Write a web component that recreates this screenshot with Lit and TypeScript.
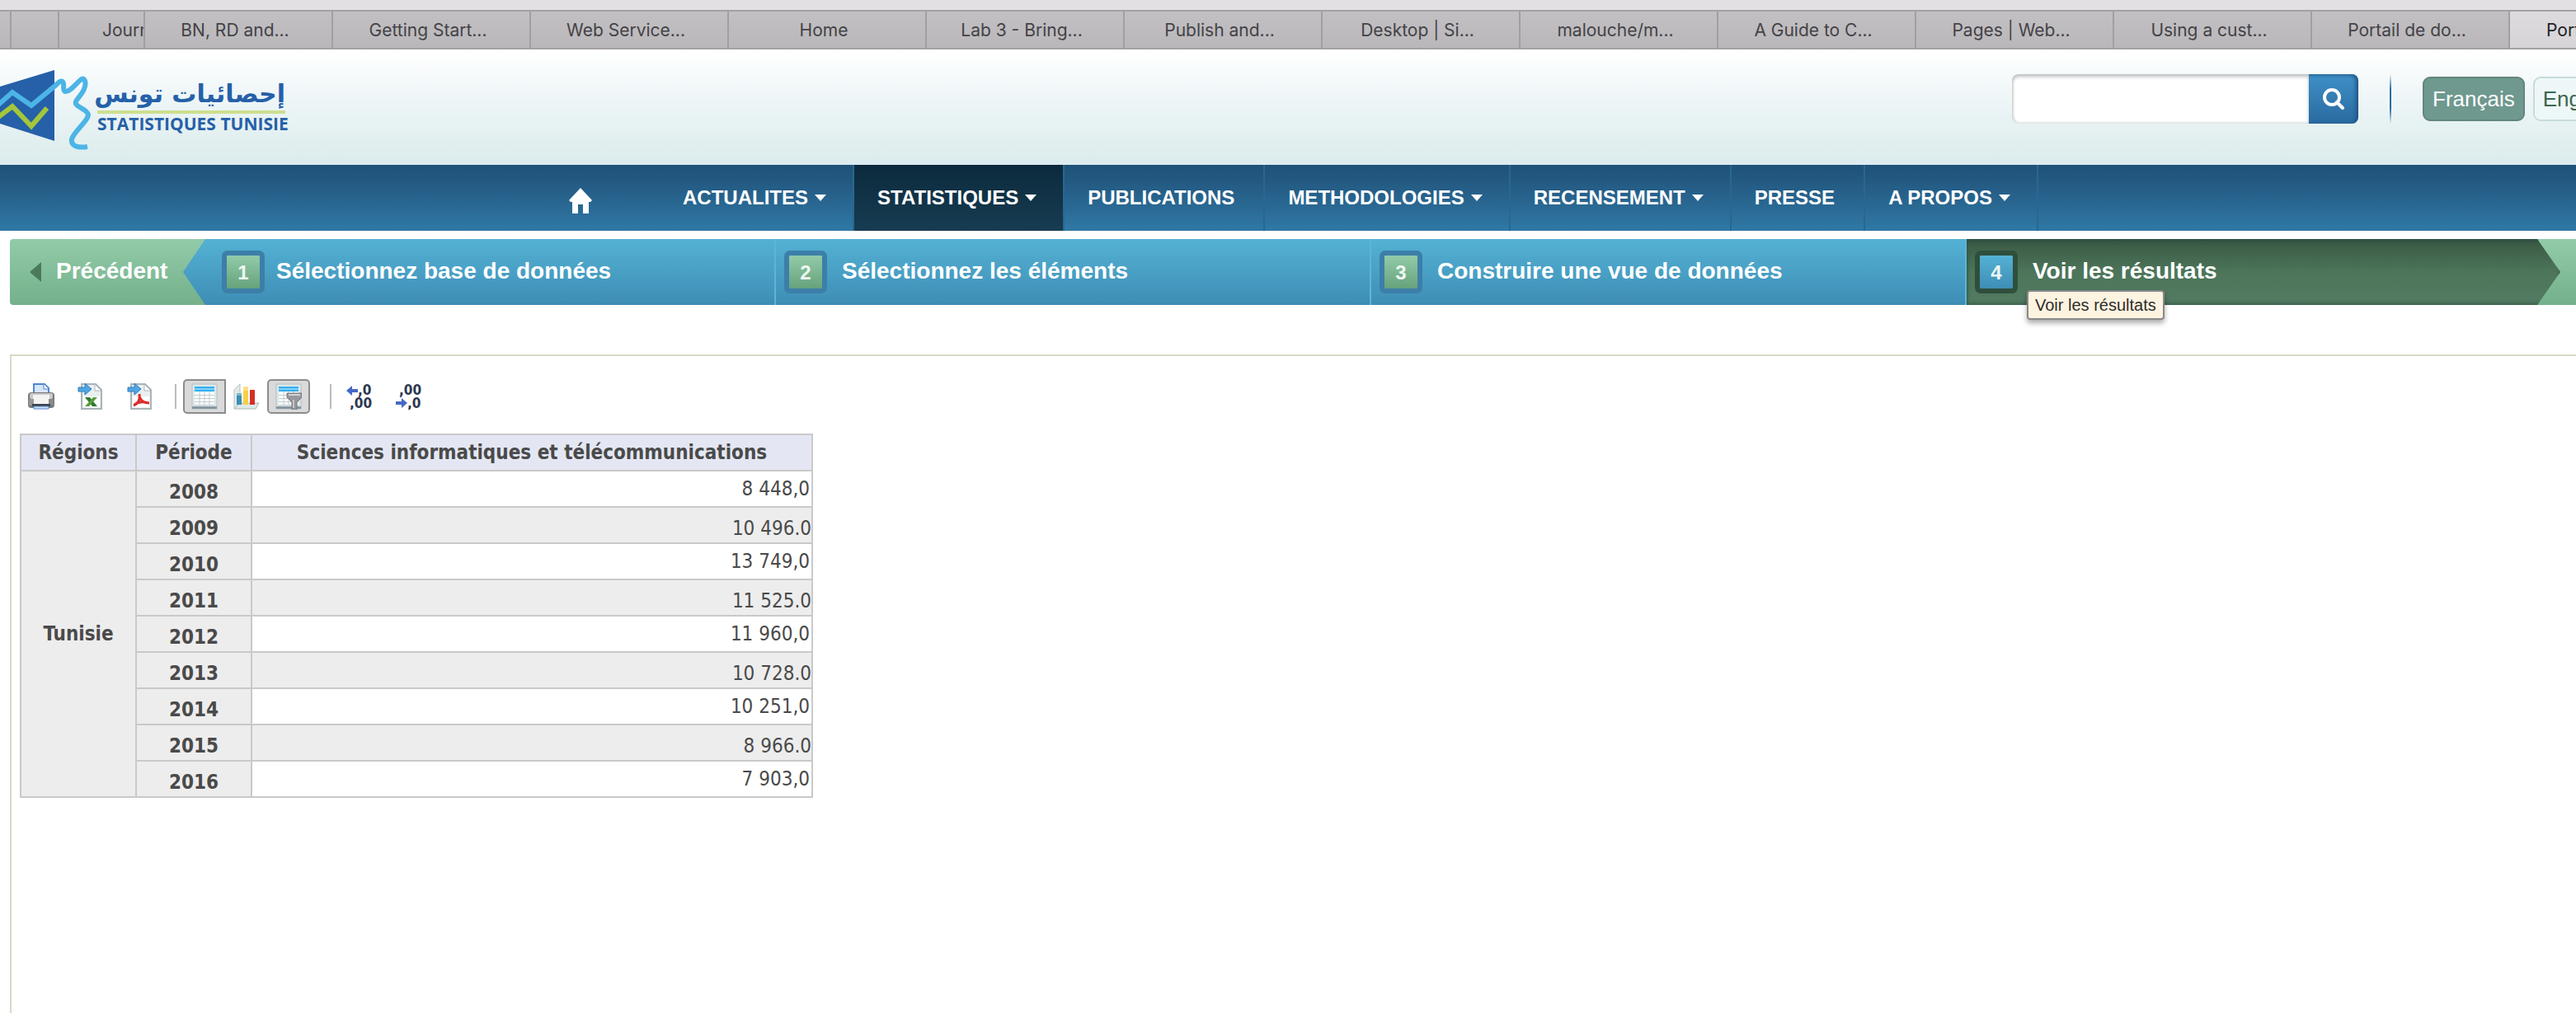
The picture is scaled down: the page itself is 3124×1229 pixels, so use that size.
import { LitElement, html, css, svg, nothing } from "lit";
import { customElement, state } from "lit/decorators.js";
import { classMap } from "lit/directives/class-map.js";

interface MenuItem {
  label: string;
  submenu: boolean;
}

const TABS = [
  "",
  "",
  "Journ",
  "BN, RD and...",
  "Getting Start...",
  "Web Service...",
  "Home",
  "Lab 3 - Bring...",
  "Publish and...",
  "Desktop | Si...",
  "malouche/m...",
  "A Guide to C...",
  "Pages | Web...",
  "Using a cust...",
  "Portail de do...",
  "Port",
];

const MENU: MenuItem[] = [
  { label: "ACTUALITES", submenu: true },
  { label: "STATISTIQUES", submenu: true },
  { label: "PUBLICATIONS", submenu: false },
  { label: "METHODOLOGIES", submenu: true },
  { label: "RECENSEMENT", submenu: true },
  { label: "PRESSE", submenu: false },
  { label: "A PROPOS", submenu: true },
];

const STEPS = [
  "Sélectionnez base de données",
  "Sélectionnez les éléments",
  "Construire une vue de données",
  "Voir les résultats",
];

const ROWS: [string, string][] = [
  ["2008", "8 448,0"],
  ["2009", "10 496.0"],
  ["2010", "13 749,0"],
  ["2011", "11 525.0"],
  ["2012", "11 960,0"],
  ["2013", "10 728.0"],
  ["2014", "10 251,0"],
  ["2015", "8 966.0"],
  ["2016", "7 903,0"],
];

@customElement("browser-tabs")
export class BrowserTabs extends LitElement {
  static styles = css`
    :host {
      display: block;
      background: #e2e0e3;
      padding-top: 12px;
      font-family: Inter, "Liberation Sans", sans-serif;
    }
    .strip {
      display: grid;
      grid-template-columns:
        12fr 58fr 104fr 228fr repeat(11, minmax(0, 240fr))
        82fr;
      border-top: 2px solid #a2a0a3;
      border-bottom: 2px solid #a2a0a3;
    }
    .tab {
      height: 44px;
      min-width: 0;
      border: 0;
      border-left: 2px solid #a19fa2;
      padding: 0 8px 0 0;
      overflow: hidden;
      white-space: nowrap;
      background: linear-gradient(#c2c0c3, #b9b7ba);
      color: #444246;
      font: inherit;
      font-size: 21px;
      text-align: center;
    }
    .edge {
      border-left: 0;
    }
    .cut {
      padding: 0 0 0 52px;
      text-align: left;
    }
    .current {
      padding: 0 0 0 44px;
      text-align: left;
      background: linear-gradient(#dddbde, #d6d4d7);
      color: #222124;
    }
  `;

  render() {
    return html`<div class="strip" role="tablist" aria-label="Onglets">
      ${TABS.map(
        (label, i) =>
          html`<button
            type="button"
            role="tab"
            aria-selected=${i === TABS.length - 1 ? "true" : "false"}
            class=${classMap({
              tab: true,
              edge: i === 0,
              cut: i === 2,
              current: i === TABS.length - 1,
            })}
          >${label}</button>`,
      )}
    </div>`;
  }
}

@customElement("site-header")
export class SiteHeader extends LitElement {
  static styles = css`
    :host {
      display: flex;
      align-items: flex-start;
      height: 140px;
      overflow: hidden;
      background: linear-gradient(#ffffff, #edf5f7 45%, #e0eeee 85%, #dcebf0);
      font-family: "Liberation Sans", Arial, sans-serif;
    }
    .logo {
      display: flex;
      color: #2560a8;
      text-decoration: none;
    }
    .mark {
      width: 112px;
      height: 140px;
      flex: none;
    }
    .names {
      display: flex;
      flex-direction: column;
      width: 228px;
      margin: 36px 0 0 6px;
      white-space: nowrap;
    }
    .arabic {
      height: 38px;
      font: bold 30px/36px "DejaVu Sans", sans-serif;
      direction: rtl;
    }
    .latin {
      border-top: 4px solid #cddf8f;
      font: bold 21px/24px "Open Sans", sans-serif;
    }
    .tools {
      display: flex;
      align-items: center;
      margin: 30px -57px 0 auto;
      flex: none;
      height: 60px;
    }
    .search {
      display: flex;
      height: 60px;
    }
    .field {
      width: 360px;
      box-sizing: border-box;
      border: 0;
      padding: 0 14px;
      border-radius: 8px 0 0 8px;
      background: #fff;
      box-shadow: inset 0 3px 4px #b9bcbd, inset 2px -2px 2px #e6e6e6;
      font: inherit;
      font-size: 24px;
    }
    .go {
      display: grid;
      place-items: center;
      width: 60px;
      border: 0;
      padding: 0;
      border-radius: 0 8px 8px 0;
      background: linear-gradient(#3f90c8, #296a9f);
      box-shadow: inset -3px 1px 4px #1f5684;
    }
    .rule {
      width: 2px;
      height: 60px;
      margin: 0 38px;
      background: linear-gradient(#2b6ca000, #2b6ca0 30%, #2b6ca0 70%, #2b6ca000);
    }
    .lang {
      display: block;
      box-sizing: border-box;
      height: 54px;
      padding: 0 10px;
      border: 2px solid #c8dbd9;
      border-radius: 9px;
      background: #eef7f8;
      color: #3c6650;
      font-size: 26px;
      line-height: 50px;
      text-decoration: none;
    }
    .chosen {
      margin-right: 10px;
      border-color: #63867c;
      background: #6f988e;
      color: #fff;
    }
  `;

  render() {
    return html`
      <a class="logo" href="#accueil">
        <svg class="mark" viewBox="0 60 112 140" aria-hidden="true">
          <path d="M0 105 66 85V171L0 150Z" fill="#2560a8" />
          <path
            d="M-2 127 15 112 38 128 68 103Q73 97 76 99C79 102 75 110 79 111 85 112 94 99 99 96 103 94 105 101 102 108 99 116 90 122 92 126 95 131 105 132 107 139 107 147 89 160 87 169 86 177 94 180 106 178"
            fill="none"
            stroke="#4cb4e6"
            stroke-width="6"
          />
          <path d="M-2 142 15 129 38 153 57 131" fill="none" stroke="#a3c63a" stroke-width="6" />
        </svg>
        <span class="names">
          <span class="arabic" lang="ar">إحصائيات تونس</span>
          <span class="latin">STATISTIQUES TUNISIE</span>
        </span>
      </a>
      <div class="tools">
        <form class="search" role="search" @submit=${(e: Event) => e.preventDefault()}>
          <input class="field" type="text" aria-label="Rechercher" />
          <button class="go" type="submit" aria-label="Lancer la recherche">
            <svg width="28" height="28" viewBox="0 0 28 28" aria-hidden="true">
              <circle cx="12" cy="12" r="9" fill="none" stroke="#fff" stroke-width="4" />
              <path d="M18 18 25 25" stroke="#fff" stroke-width="4" stroke-linecap="round" />
            </svg>
          </button>
        </form>
        <span class="rule"></span>
        <a class="lang chosen" href="#fr">Français</a>
        <a class="lang" href="#en">English</a>
      </div>
    `;
  }
}

@customElement("main-menu")
export class MainMenu extends LitElement {
  static styles = css`
    :host {
      display: block;
      background: linear-gradient(#1f5178, #27638d 50%, #3079a5);
      font-family: "Liberation Sans", Arial, sans-serif;
    }
    .bar {
      display: flex;
      height: 80px;
      margin: 0;
      padding: 0 0 0 21%;
      list-style: none;
    }
    .home {
      display: flex;
      box-sizing: border-box;
      width: 144px;
      height: 80px;
      padding: 28px 0 0 34px;
    }
    .entry {
      display: flex;
      align-items: center;
      gap: 8px;
      box-sizing: border-box;
      height: 80px;
      padding: 0 35px 0 28px;
      border-right: 2px solid #286790;
      color: #fff;
      font-size: 24px;
      font-weight: bold;
      text-decoration: none;
      white-space: nowrap;
    }
    .parent {
      padding-right: 32px;
    }
    .active {
      background: linear-gradient(#0c2a3d, #173c52);
    }
    .caret {
      border: 7px solid transparent;
      border-top: 8px solid #fff;
      border-bottom: 0;
    }
  `;

  render() {
    return html`<nav aria-label="Menu principal">
      <ul class="bar">
        <li>
          <a class="home" href="#accueil" aria-label="Accueil">
            <svg width="28" height="31" viewBox="0 0 28 31" aria-hidden="true">
              <path d="M14 0 28 15 26 17H24V31H17V20H11V31H4V17H2L0 15Z" fill="#fff" />
            </svg>
          </a>
        </li>
        ${MENU.map(
          (item, i) => html`<li>
            <a
              class=${classMap({ entry: true, parent: item.submenu, active: i === 1 })}
              href="#menu-${i}"
            >
              ${item.label}${item.submenu ? html`<span class="caret"></span>` : nothing}
            </a>
          </li>`,
        )}
      </ul>
    </nav>`;
  }
}

@customElement("wizard-steps")
export class WizardSteps extends LitElement {
  static styles = css`
    :host {
      display: flex;
      margin: 10px 0 60px 12px;
      height: 80px;
      font: bold 28px/32px "Liberation Sans", Arial, sans-serif;
    }
    .prev {
      display: flex;
      align-items: center;
      gap: 18px;
      box-sizing: border-box;
      width: 238px;
      margin-right: -28px;
      padding: 0 0 0 24px;
      border: 0;
      border-radius: 4px 0 0 4px;
      background: linear-gradient(#92cba8, #74b08b);
      color: #fff;
      font: inherit;
    }
    .back {
      flex: none;
    }
    .next {
      width: 47px;
      margin-left: -28px;
      padding: 0;
      border: 0;
      background: linear-gradient(#92cba8, #74b08b);
    }
    .steps {
      display: grid;
      flex: 1;
      grid-template-columns: 719fr 722fr 722fr 720fr;
      margin: 0;
      padding: 0;
      list-style: none;
      z-index: 1;
    }
    .item {
      position: relative;
      min-width: 0;
    }
    .step {
      display: flex;
      align-items: center;
      gap: 18px;
      box-sizing: border-box;
      height: 80px;
      padding-left: 10px;
      border-right: 2px solid #5ab6d8;
      background: linear-gradient(#54b2d4, #3e8db5);
      color: #fff;
      text-decoration: none;
      white-space: nowrap;
    }
    .first {
      gap: 14px;
      padding-left: 47px;
      clip-path: polygon(0 50%, 27px 0, 100% 0, 100% 100%, 27px 100%);
    }
    .last {
      border-right: 0;
      background: linear-gradient(#3a5743, #4c755a 50%, #527b62);
      box-shadow: inset 0 3px 4px #2f4f45, inset 0 -2px 4px #3c5d49;
      clip-path: polygon(0 0, calc(100% - 28px) 0, 100% 50%, calc(100% - 28px) 100%, 0 100%);
    }
    .badge {
      box-sizing: border-box;
      width: 52px;
      height: 52px;
      flex: none;
      border: 6px solid #3c7fa9;
      border-radius: 7px;
      background: linear-gradient(#92cba8, #66a27c) padding-box;
      color: #eef8f2;
      font-size: 24px;
      line-height: 42px;
      text-align: center;
    }
    .last .badge {
      border-color: #2f4f3c;
      background: linear-gradient(#54b2d4, #3e8db5) padding-box;
    }
    .title,
    .label {
      padding-bottom: 2px;
    }
    .tip {
      position: absolute;
      top: 62px;
      left: 73px;
      padding: 0 8px;
      border: 2px solid #8a8888;
      border-radius: 4px;
      background: #fdf3e1;
      box-shadow: 0 4px 6px #00000055;
      color: #2d2c2b;
      font-size: 20px;
      font-weight: normal;
      white-space: nowrap;
    }
  `;

  render() {
    return html`
      <button class="prev" type="button">
        <svg class="back" width="14" height="24" viewBox="0 0 14 24" aria-hidden="true">
          <path d="M14 0V24L0 12Z" fill="#4a7a5c" />
        </svg>
        <span class="label">Précédent</span>
      </button>
      <ol class="steps">
        ${STEPS.map((title, i) => {
          const last = i === STEPS.length - 1;
          return html`<li class="item">
            <a
              class=${classMap({ step: true, first: i === 0, last })}
              href="#etape-${i + 1}"
              aria-current=${last ? "step" : nothing}
            >
              <span class="badge">${i + 1}</span>
              <span class="title">${title}</span>
            </a>
            ${last ? html`<span class="tip" role="tooltip">${title}</span>` : nothing}
          </li>`;
        })}
      </ol>
      <button class="next" type="button" aria-label="Suivant"></button>
    `;
  }
}

const sheet = svg`
  <path d="M10 1H22L29 8V31H5V1Z" fill="#e9eff0" stroke="#a9b4b8" stroke-width="2" />
  <path d="M21 1V9H29Z" fill="#fff" stroke="#a9b4b8" stroke-width="1" />
  <path d="M7 16H27V29H7Z" fill="#fff" />
  <path d="M1 5H9V0L17 7 9 14V10H1Z" fill="#4fa5e2" stroke="#2e7fc0" stroke-width="1" />`;

const grid = svg`
  <path d="M1 1H31V31H1Z" fill="#dde7ea" stroke="#b3bfc4" />
  <path d="M1 28H31V31H1Z" fill="#8797a0" />
  <path d="M4 4H28V27H4Z" fill="#fbfdfd" />
  <path d="M4 4H28V10H4Z" fill="#35aef0" />
  <path d="M4 14.500H28M4 18.500H28M4 22.500H28M4 26.500H28M10 10V27M16 10V27M22 10V27" stroke="#c3ccd0" />
  <path d="M4 7H28" stroke="#7fd0fa" stroke-width="2" />`;

const arrow = (x: number, y: number, flip: boolean) =>
  svg`<path transform="translate(${x} ${y}) scale(${flip ? -1 : 1} 1)"
    d="M0 6 7 0V4H14V8H7V12Z" fill="#4668c4" />`;

const ICONS = {
  print: svg`
    <path d="M7 12V1H20L25 6V12Z" fill="#d5e5fa" stroke="#4f86d0" stroke-width="2" />
    <path d="M19 1V7H25" fill="#fff" stroke="#4f86d0" />
    <rect x="0" y="11" width="32" height="19" rx="4" fill="#777" />
    <rect x="2" y="12" width="28" height="7" rx="2" fill="#c9c9c9" />
    <rect x="6" y="14" width="20" height="11" fill="#f4f4f4" />
    <rect x="1" y="19" width="6" height="8" fill="#999" />
    <rect x="25" y="19" width="6" height="8" fill="#888" />
    <path d="M5 25H27V28H5Z" fill="#3f4449" />
    <path d="M7 28H25V31H7Z" fill="#cfe2fb" stroke="#4f86d0" />`,
  excel: svg`${sheet}
    <path d="M9 17H15L24 28H18Z" fill="#2f7a2e" />
    <path d="M24 17H19L9 28H14Z" fill="#5a9a3c" />`,
  pdf: svg`${sheet}
    <path d="M15 13C16 20 13 25 8 27M15 16C17 22 21 24 27 24M9 26C14 22 19 22 26 24"
      fill="none" stroke="#dc2a2a" stroke-width="3" />`,
  table: grid,
  chart: svg`
    <path d="M1 8 8 1V26L1 31Z" fill="#e3eaea" stroke="#b3c4c4" />
    <path d="M1 31 8 24H31L27 31Z" fill="#dfe8e8" stroke="#a9b8b8" />
    <path d="M4 12H10V26H4Z" fill="#3a90b0" />
    <path d="M12 4H18V26H12Z" fill="#f8cf46" />
    <path d="M20 8H26V26H20Z" fill="#d42f28" />
    <path d="M12 4H18V9H12ZM4 12H10V15H4Z" fill="#ffffff55" />`,
  filter: svg`${grid}
    <path d="M14 12H32V17L26 23V32H20V23L14 17Z" fill="#96989d" stroke="#74767b" />
    <path d="M16 14H30" stroke="#d3d5d8" stroke-width="2" />
    <path d="M22 20V30" stroke="#c3c5c8" stroke-width="2" />`,
};

@customElement("result-panel")
export class ResultPanel extends LitElement {
  static styles = css`
    :host {
      display: block;
      box-sizing: border-box;
      flex: 1;
      margin-left: 12px;
      padding: 28px 10px;
      border: solid #d6dac6;
      border-width: 2px 0 0 2px;
      color: #4a4a4a;
      font-family: "DejaVu Sans Condensed", "Noto Sans", sans-serif;
    }
    .toolbar {
      display: flex;
      align-items: center;
      height: 42px;
      margin-bottom: 24px;
    }
    .tool {
      display: grid;
      place-items: center;
      box-sizing: border-box;
      width: 52px;
      height: 42px;
      padding: 0;
      border: 2px solid transparent;
      background: none;
      border-radius: 5px;
    }
    .wide {
      margin-right: 8px;
    }
    .pressed {
      border-color: #8c8c8c;
      background: #dadada;
    }
    .joined {
      border-radius: 5px 0 0 5px;
    }
    .narrow-tool {
      width: 50px;
    }
    .sep {
      width: 2px;
      height: 30px;
      background: #bcbcbc;
    }
    .before {
      margin: 0 8px 0 16px;
    }
    .between {
      margin: 0 8px 0 24px;
    }
    .decimals {
      font: bold 17px "DejaVu Sans Condensed", sans-serif;
      fill: #2d3850;
    }
    .data {
      width: 962px;
      border-collapse: collapse;
      table-layout: fixed;
      font-size: 24px;
      line-height: 42px;
    }
    .narrow {
      width: 138px;
    }
    .data th,
    .data td {
      padding: 0;
      border: 2px solid #c9c9c9;
    }
    .head {
      background: #e4e7f3;
    }
    .area {
      background: #ededed;
    }
    .data .year {
      padding-top: 8px;
      background: #ededed;
      line-height: 34px;
    }
    .data .value {
      padding-right: 2px;
      background: #fff;
      text-align: right;
    }
    .data .shaded {
      padding: 8px 0 0;
      background: #ededed;
      line-height: 34px;
    }
  `;

  @state() private showTable = true;
  @state() private showFilter = true;

  private tool(label: string, art: unknown, cls: string, pressed = false, onClick?: () => void) {
    return html`<button
      type="button"
      class="tool ${cls} ${pressed ? "pressed" : ""}"
      aria-label=${label}
      @click=${onClick ?? nothing}
    >
      <svg width="32" height="32" viewBox="0 0 32 32" aria-hidden="true">${art}</svg>
    </button>`;
  }

  render() {
    return html`
      <div class="toolbar" role="toolbar" aria-label="Outils">
        ${this.tool("Imprimer", ICONS.print, "wide")}
        ${this.tool("Exporter vers Excel", ICONS.excel, "wide")}
        ${this.tool("Exporter en PDF", ICONS.pdf, "")}
        <span class="sep before"></span>
        ${this.tool("Tableau", ICONS.table, "joined", this.showTable, () => {
          this.showTable = !this.showTable;
        })}
        ${this.tool("Graphique", ICONS.chart, "narrow-tool")}
        ${this.tool("Filtrer", ICONS.filter, "", this.showFilter, () => {
          this.showFilter = !this.showFilter;
        })}
        <span class="sep between"></span>
        ${this.tool(
          "Ajouter une décimale",
          svg`${arrow(0, 3, false)}<text class="decimals" x="14" y="14">,0</text>
            <text class="decimals" x="4" y="30">,00</text>`,
          "wide",
        )}
        ${this.tool(
          "Retirer une décimale",
          svg`<text class="decimals" x="4" y="14">,00</text>${arrow(14, 18, true)}
            <text class="decimals" x="14" y="30">,0</text>`,
          "",
        )}
      </div>
      <table class="data">
        <thead>
          <tr>
            <th class="head narrow" scope="col">Régions</th>
            <th class="head narrow" scope="col">Période</th>
            <th class="head" scope="col">Sciences informatiques et télécommunications</th>
          </tr>
        </thead>
        <tbody>
          ${ROWS.map(
            ([year, value], i) => html`<tr>
              ${i === 0
                ? html`<th class="area" scope="rowgroup" rowspan=${ROWS.length}>Tunisie</th>`
                : nothing}
              <th class="year" scope="row">${year}</th>
              <td class=${classMap({ value: true, shaded: i % 2 === 1 })}>${value}</td>
            </tr>`,
          )}
        </tbody>
      </table>
    `;
  }
}

@customElement("app-root")
export class AppRoot extends LitElement {
  static styles = css`
    :host {
      display: flex;
      flex-direction: column;
      min-height: 100vh;
      overflow-x: hidden;
      background: #fff;
    }
  `;

  render() {
    return html`
      <browser-tabs></browser-tabs>
      <site-header></site-header>
      <main-menu></main-menu>
      <wizard-steps></wizard-steps>
      <result-panel></result-panel>
    `;
  }
}
